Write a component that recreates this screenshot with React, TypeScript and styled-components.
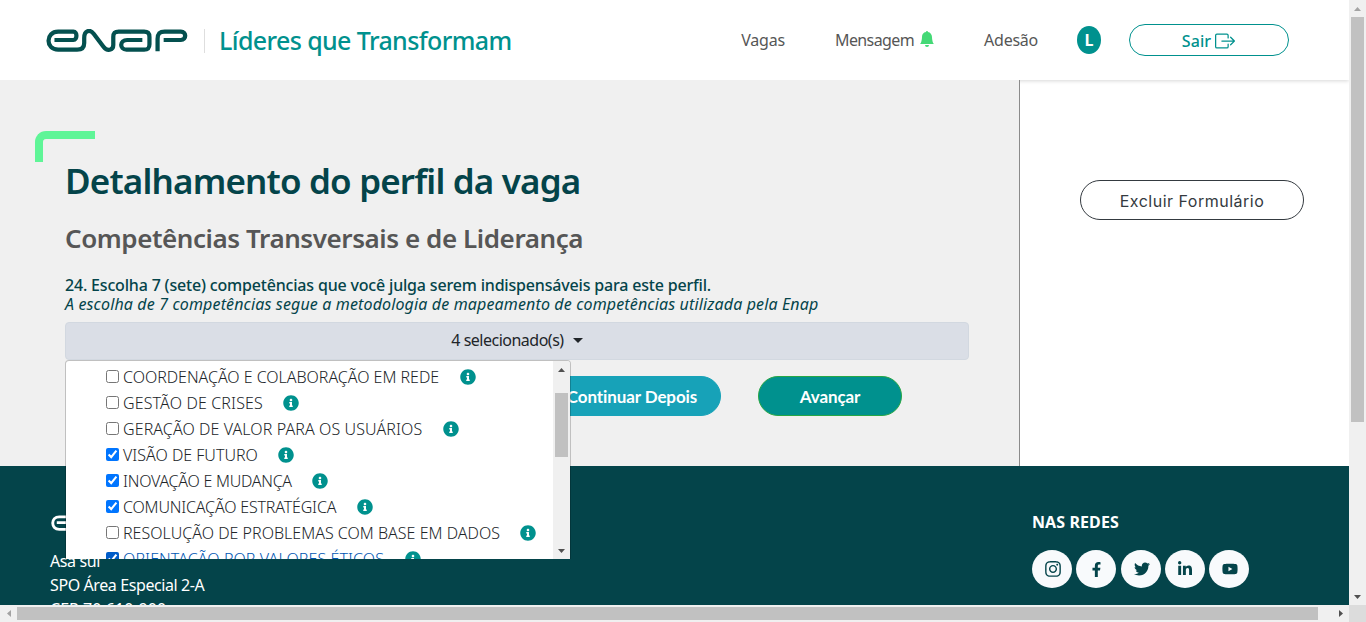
import React from 'react';
import styled, { createGlobalStyle, css } from 'styled-components';
import { FaFacebookF, FaInfoCircle, FaInstagram, FaLinkedinIn, FaTwitter, FaYoutube } from 'react-icons/fa';
import { BsBellFill, BsBoxArrowRight } from 'react-icons/bs';

const Global = createGlobalStyle`
  *, *::before, *::after { box-sizing: border-box; }
  body { margin: 0; overflow: hidden; background: #fff; font-family: "Noto Sans", "Open Sans", sans-serif; font-size: 16px; color: #212529; }
  h1, h2, h3, p, ul { margin: 0; padding: 0; }
`;

const Frame = styled.div`
  display: grid;
  grid-template: 605px 17px / 1349px 17px;
  width: 1366px;
  height: 622px;
  overflow: hidden;
`;
const Page = styled.div`
  display: flex;
  flex-direction: column;
  min-width: 0;
  overflow: hidden;
`;

const Header = styled.header`
  position: relative;
  display: flex;
  align-items: center;
  flex: none;
  height: 80px;
  padding: 0 60px 0 46px;
  background: #fff;
  box-shadow: 0 1px 4px rgba(0, 0, 0, 0.16);
`;
const Brand = styled.div`
  flex: 1;
  display: flex;
  align-items: center;
  svg { margin-top: 1px; }
`;
const BrandName = styled.span`
  margin-left: 16px;
  padding-left: 15px;
  background: linear-gradient(#dedede, #dedede) left 6px / 1px 24px no-repeat;
  color: #00918e;
  font-size: 25px;
  font-weight: 500;
  line-height: 34px;
  letter-spacing: -0.61px;
`;
const Nav = styled.nav`
  display: flex;
  align-items: center;
`;
const NavItem = styled.span<{ $gap: number; $spacing: number }>`
  display: flex;
  align-items: center;
  gap: 5px;
  margin-right: ${(p) => p.$gap}px;
  color: #565656;
  letter-spacing: ${(p) => p.$spacing}px;
  svg { color: #44d976; margin-bottom: 2px; }
`;
const Avatar = styled.span`
  display: flex;
  align-items: center;
  justify-content: center;
  width: 24px;
  height: 28px;
  margin-right: 28px;
  border-radius: 50%;
  background: #00918e;
  color: #fff;
  font-weight: 700;
`;
const pill = css`
  display: flex;
  align-items: center;
  justify-content: center;
  border: 1px solid;
  border-radius: 20px;
  padding: 0;
  font-size: 16px;
`;
const LogoutButton = styled.button`
  ${pill}
  gap: 4px;
  width: 160px;
  height: 32px;
  padding: 2px 1px 0 0;
  background: #fff;
  border-color: #00918e;
  color: #00918e;
  font-family: inherit;
  font-weight: 500;
  letter-spacing: 0.1px;
`;

const Main = styled.main`
  display: flex;
  flex: none;
  height: 386px;
`;
const FormArea = styled.section`
  position: relative;
  width: 1020px;
  padding: 79px 50px 0 65px;
  background: #f0f0f0;
  border-right: 1px solid #8b8b8b;
`;
const Corner = styled.span`
  position: absolute;
  left: 35px;
  top: 51px;
  width: 60px;
  height: 31px;
  border: solid #5ff597;
  border-width: 8px 0 0 8px;
  border-top-left-radius: 11px;
`;
const Title = styled.h1`
  height: 50px;
  color: #04444a;
  font-size: 35px;
  font-weight: 600;
  line-height: 44px;
  letter-spacing: -0.83px;
  white-space: nowrap;
`;
const Subtitle = styled.h2`
  height: 67px;
  color: #565656;
  font-size: 26px;
  font-weight: 600;
  line-height: 58px;
  letter-spacing: -0.43px;
  white-space: nowrap;
`;
const Question = styled.p`
  color: #04444a;
  font-weight: 500;
  line-height: 19px;
  letter-spacing: -0.18px;
  white-space: nowrap;
`;
const Hint = styled.p`
  color: #04444a;
  font-style: italic;
  line-height: 19px;
  letter-spacing: 0.14px;
  white-space: nowrap;
`;
const Select = styled.div`
  position: relative;
  margin-top: 8px;
`;
const SelectToggle = styled.button`
  display: flex;
  align-items: center;
  justify-content: center;
  gap: 9px;
  width: 904px;
  height: 38px;
  padding: 0 0 2px;
  border: 1px solid #d2d8e0;
  border-radius: 4px;
  background: #dadee6;
  color: #212529;
  font: 400 16px "Noto Sans", sans-serif;
  letter-spacing: -0.5px;
  &::after {
    content: "";
    border: solid transparent;
    border-width: 5px 5px 0;
    border-top-color: #212529;
  }
`;
const Menu = styled.div`
  position: absolute;
  z-index: 2;
  left: 0;
  top: 38px;
  display: flex;
  width: 506px;
  height: 199px;
  border: 1px solid rgba(0, 0, 0, 0.2);
  border-bottom: 0;
  border-radius: 4px 4px 0 0;
  background: #fff;
  background-clip: padding-box;
  overflow: hidden;
`;
const Options = styled.ul`
  flex: 1;
  padding: 3px 0 0 40px;
  overflow: hidden;
  list-style: none;
`;
const Option = styled.li<{ $active?: boolean; $spacing: number }>`
  display: flex;
  align-items: center;
  height: 26px;
  color: ${(p) => (p.$active ? '#0056b3' : '#212529')};
  font-weight: 300;
  letter-spacing: ${(p) => p.$spacing}px;
  white-space: nowrap;
  input { width: 13px; height: 13px; margin: 0 4px 1px 0; accent-color: ${(p) => (p.$active ? '#005cc8' : 'auto')}; }
  svg { margin-left: 20.5px; color: #00918e; }
`;
const Actions = styled.div`
  display: flex;
  gap: 37px;
  margin: 16px 0 0 478px;
`;
const ActionButton = styled.button<{ $width: number; $bg: string; $edge: string }>`
  ${pill}
  width: ${(p) => p.$width}px;
  height: 40px;
  padding-top: 1px;
  background: ${(p) => p.$bg};
  border-color: ${(p) => p.$edge};
  color: #fff;
  font-family: Lato, sans-serif;
  font-weight: 700;
  font-size: 17px;
  letter-spacing: -0.1px;
`;
const Aside = styled.aside`
  flex: 1;
  padding: 100px 0 0 60px;
  background: #fff;
`;
const DeleteButton = styled.button`
  ${pill}
  width: 224px;
  height: 40px;
  padding-top: 2px;
  background: #fff;
  border-color: #343a40;
  color: #343a40;
  font-family: Inter, sans-serif;
  letter-spacing: 0.5px;
`;

const Footer = styled.footer`
  display: flex;
  flex: 1;
  justify-content: space-between;
  padding: 0 100px 0 50px;
  background: #04444a;
  color: #fff;
  overflow: hidden;
`;
const Address = styled.div`
  padding: 49px 0 0;
  line-height: 24px;
  white-space: nowrap;
  svg { display: block; margin: 0 0 18px 1px; }
`;
const AddressLine = styled.p<{ $spacing: number }>`
  letter-spacing: ${(p) => p.$spacing}px;
`;
const Social = styled.div`
  padding-top: 44px;
  width: 217px;
`;
const SocialTitle = styled.h3`
  font-size: 16px;
  line-height: 24px;
  font-weight: 700;
  letter-spacing: 0.1px;
`;
const SocialList = styled.div`
  display: flex;
  justify-content: space-between;
  margin-top: 16px;
`;
const SocialLink = styled.span<{ $shift: number }>`
  display: flex;
  align-items: center;
  justify-content: center;
  width: 40px;
  height: 38px;
  padding-left: ${(p) => p.$shift}px;
  border-radius: 50%;
  background: #f8fafc;
  color: #04444a;
`;

const Track = styled.div<{ $horizontal?: boolean }>`
  display: flex;
  flex-direction: ${(p) => (p.$horizontal ? 'row' : 'column')};
  flex: none;
  align-items: center;
  width: ${(p) => (p.$horizontal ? 'auto' : '17px')};
  background: #f0f0f0;
`;
const Thumb = styled.div<{ $size: number; $before?: number; $horizontal?: boolean }>`
  flex: none;
  background: #c1c1c1;
  ${(p) =>
    p.$horizontal
      ? css`width: ${p.$size}px; height: 13px; margin-right: auto;`
      : css`width: 13px; height: ${p.$size}px; margin: ${p.$before ?? 0}px 0 auto;`}
`;
const ScrollCorner = styled.div`
  background: #dcdcdc;
`;
const ArrowIcon = styled.svg`
  flex: none;
`;

type Direction = 'up' | 'down' | 'left' | 'right';
const arrows: Record<Direction, string> = {
  up: 'M5 11h7L8.5 7z',
  down: 'M5 7h7L8.5 11z',
  left: 'M11 5v7L7 8.5z',
  right: 'M7 5v7l4-3.5z',
};
const Arrow = ({ to, dim }: { to: Direction; dim?: boolean }) => (
  <ArrowIcon width="17" height="17" viewBox="0 0 17 17">
    <path d={arrows[to]} fill={dim ? '#a3a3a3' : '#505050'} />
  </ArrowIcon>
);

const Logo = ({ color, width, height }: { color: string; width: number; height: number }) => (
  <svg width={width} height={height} viewBox="136 88 420 69" preserveAspectRatio="none" fill="none" stroke={color} strokeWidth="12.5">
    <path d="M161 121H217C229 121 229 96 217 96H172C134 96 134 150 172 150H228C243 150 249 143 249 130V115C249 92 266 88 277 102L306 141C317 156 335 152 335 136V112C335 100 340 96 351 96H426C438 96 442 101 442 112V134C442 146 438 150 426 150H374C353 150 353 121 376 121H421" />
    <path d="M466 155V118C466 101 472 96 487 96H535C552 96 552 121 535 121H484" />
  </svg>
);

const options = [
  { label: 'COORDENAÇÃO E COLABORAÇÃO EM REDE', checked: false, spacing: -0.02 },
  { label: 'GESTÃO DE CRISES', checked: false, spacing: 0.14 },
  { label: 'GERAÇÃO DE VALOR PARA OS USUÁRIOS', checked: false, spacing: 0.1 },
  { label: 'VISÃO DE FUTURO', checked: true, spacing: 0 },
  { label: 'INOVAÇÃO E MUDANÇA', checked: true, spacing: -0.25 },
  { label: 'COMUNICAÇÃO ESTRATÉGICA', checked: true, spacing: -0.17 },
  { label: 'RESOLUÇÃO DE PROBLEMAS COM BASE EM DADOS', checked: false, spacing: 0.02 },
  { label: 'ORIENTAÇÃO POR VALORES ÉTICOS', checked: true, active: true, spacing: 0.09 },
];
const networks = [
  { Icon: FaInstagram, size: 18, shift: 2 },
  { Icon: FaFacebookF, size: 15, shift: 0 },
  { Icon: FaTwitter, size: 16, shift: 3 },
  { Icon: FaLinkedinIn, size: 16, shift: 1 },
  { Icon: FaYoutube, size: 16, shift: 1 },
];

export default function App() {
  return (
    <Frame>
      <Global />
      <Page>
        <Header>
          <Brand>
            <Logo color="#04504f" width={142} height={23} />
            <BrandName>Líderes que Transformam</BrandName>
          </Brand>
          <Nav>
            <NavItem $gap={50} $spacing={-0.2}>Vagas</NavItem>
            <NavItem $gap={49} $spacing={-0.6}>Mensagem <BsBellFill size={16} /></NavItem>
            <NavItem $gap={39} $spacing={-0.25}>Adesão</NavItem>
            <Avatar>L</Avatar>
            <LogoutButton>Sair <BsBoxArrowRight size={20} /></LogoutButton>
          </Nav>
        </Header>
        <Main>
          <FormArea>
            <Corner />
            <Title>Detalhamento do perfil da vaga</Title>
            <Subtitle>Competências Transversais e de Liderança</Subtitle>
            <Question>24. Escolha 7 (sete) competências que você julga serem indispensáveis para este perfil.</Question>
            <Hint>A escolha de 7 competências segue a metodologia de mapeamento de competências utilizada pela Enap</Hint>
            <Select>
              <SelectToggle>4 selecionado(s)</SelectToggle>
              <Menu>
                <Options>
                  {options.map((o) => (
                    <Option key={o.label} $active={o.active} $spacing={o.spacing}>
                      <input type="checkbox" checked={o.checked} readOnly />
                      <span>{o.label}</span>
                      <FaInfoCircle size={16} />
                    </Option>
                  ))}
                </Options>
                <Track>
                  <Arrow to="up" />
                  <Thumb $size={64} $before={15} />
                  <Arrow to="down" />
                </Track>
              </Menu>
            </Select>
            <Actions>
              <ActionButton $width={178} $bg="#17a2b8" $edge="#17a2b8">Continuar Depois</ActionButton>
              <ActionButton $width={144} $bg="#00918e" $edge="#28a745">Avançar</ActionButton>
            </Actions>
          </FormArea>
          <Aside>
            <DeleteButton>Excluir Formulário</DeleteButton>
          </Aside>
        </Main>
        <Footer>
          <Address>
            <Logo color="#fff" width={97} height={16} />
            <AddressLine $spacing={-0.4}>Asa sul</AddressLine>
            <AddressLine $spacing={-0.4}>SPO Área Especial 2-A</AddressLine>
            <AddressLine $spacing={0.05}>CEP 70.610-900</AddressLine>
          </Address>
          <Social>
            <SocialTitle>NAS REDES</SocialTitle>
            <SocialList>
              {networks.map(({ Icon, size, shift }, i) => (
                <SocialLink key={i} $shift={shift}><Icon size={size} /></SocialLink>
              ))}
            </SocialList>
          </Social>
        </Footer>
      </Page>
      <Track>
        <Arrow to="up" dim />
        <Thumb $size={405} />
        <Arrow to="down" />
      </Track>
      <Track $horizontal>
        <Arrow to="left" dim />
        <Thumb $horizontal $size={1301} />
        <Arrow to="right" />
      </Track>
      <ScrollCorner />
    </Frame>
  );
}
